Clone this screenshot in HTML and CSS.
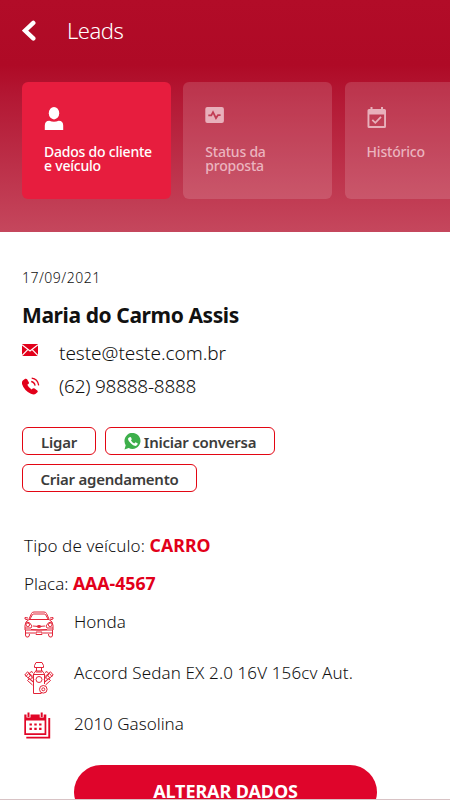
FILE: index.html
```
<!DOCTYPE html>
<html lang="pt-BR">

<head>
    <meta charset="utf-8">
    <title>Leads</title>
    <link rel="stylesheet" href="styles.css">
</head>

<body>
    <header class="header">
        <div class="top-bar">
            <svg class="back" viewBox="0 0 14 22" width="14" height="22">
                <path d="M11.3 2.9L3 10.6l8.3 7.8" />
            </svg>
            <h1>Leads</h1>
        </div>

        <nav class="tabs">
            <div class="tab active">
                <svg viewBox="0 0 20 24" width="20" height="24">
                    <ellipse cx="10" cy="6.2" rx="5.2" ry="6.2" />
                    <path d="M.8 23v-4.500q0-4.700 4.500-4.700q4.700 1.700 9.400 0q4.500 0 4.500 4.700V23z" />
                </svg>
                <span>Dados do cliente<br>e veículo</span>
            </div>
            <div class="tab">
                <svg viewBox="0 0 20 24" width="20" height="24">
                    <rect x=".3" width="18.600" height="16" rx="2" />
                    <path class="pulse" d="M3.300 8.300h3l1.700-3.200 3 6 2-3h2.600" />
                </svg>
                <span>Status da<br>proposta</span>
            </div>
            <div class="tab">
                <svg viewBox="0 0 20 24" width="20" height="24">
                    <path fill-rule="evenodd" d="M3.500 0h2v2h8.500V0h2v2h1.500q1.500 0 1.500 1.500v16q0 1.500-1.500 1.500h-15.500q-1.500 0-1.500-1.500V3.500Q.5 2 2 2h1.500zM2.400 7.500v11.500h14.700V7.500z" />
                    <path class="check" d="M5.300 12.800l3 3 5.700-6" />
                </svg>
                <span>Histórico</span>
            </div>
        </nav>
    </header>

    <main>
        <section class="client">
            <p class="date">17/09/2021</p>
            <h2>Maria do Carmo Assis</h2>
            <div class="contact email">
                <svg viewBox="0 0 16 12" width="16" height="12">
                    <rect width="16" height="12" />
                    <path class="envelope" d="M0 .8l8 6.200L16 .8M0 11.600l5.800-6M16 11.600l-5.800-6" />
                </svg>
                <span>teste@teste.com.br</span>
            </div>
            <div class="contact phone">
                <svg viewBox="0 0 18 18" width="18" height="18">
                    <path d="M.8 3.500L3.200 1.800q1.300-.5 1.900.5l1.700 2.900q.5 1-.4 1.700l-1.100.9q1.300 3 4.300 4.700l1.100-1q.9-.7 1.900 0l2.700 1.900q.9.900.1 1.800l-2 1.900q-1.500 1-4.500-.4Q2.300 13.800 0 7q-.4-2.300.8-3.500z" />
                    <path class="wave" d="M9.200 4.500q3.200.5 3.900 4.200M9.700 1.200q6 .8 7 7.200" />
                </svg>
                <span>(62) 98888-8888</span>
            </div>
        </section>

        <div class="actions">
            <button class="call">Ligar</button>
            <button class="chat">
                <svg viewBox="0 0 17 17" width="17" height="17">
                    <path d="M.5 16.500l1.200-4.300a8 8 0 1 1 3 2.800z" />
                    <path class="handset" d="M5 4.400l1.200-.5q.7 0 .9.6l.7 1.700-.8 1.300q1.100 2 3.200 2.900l1.200-1.200 2.100 1q.4.3.2.9-.5 1.700-2.200 1.800Q9.300 13 7 10.600 4 7.700 4 5.900 4 5 5 4.400z" />
                </svg>
                <span>Iniciar conversa</span>
            </button>
            <button class="schedule">Criar agendamento</button>
        </div>

        <section class="vehicle">
            <p class="type"><span>Tipo de veículo:</span> <b>CARRO</b></p>
            <p class="plate"><span>Placa:</span> <b>AAA-4567</b></p>

            <div class="spec brand">
                <svg class="line-icon" viewBox="0 0 30 28" width="30" height="28">
                    <path d="M5 8L7.500 2.500Q8 1 10 1h10q2 0 2.500 1.500L25 8M6 8l2.500-4.500Q9 3 10 3h10q1 0 1.500.5L24 8M5 8.500h20M5 8.500q-4 2-4 6V19h28v-4.500q0-4-4-6M4 7L1 6.500V8l3 1M26 7l3-.5V8l-3 1M2 11q4-.5 6 4l-1 2H1M28 11q-4-.5-6 4l1 2h6M9 15q6 1 12 0M7 18.500q8 1 16 0M1.500 19v5q0 2 1.500 2H4q1.500 0 1.500-3M28.500 19v5q0 2-1.500 2H26q-1.500 0-1.500-3M2 22h9M19 22h9M12 21h6v2.500h-6z" />
                    <circle cx="3.800" cy="13.800" r="1.800" />
                    <circle cx="26.200" cy="13.800" r="1.800" />
                    <ellipse cx="15" cy="15.500" rx="2" ry="1" />
                </svg>
                <span>Honda</span>
            </div>
            <div class="spec model">
                <svg class="line-icon" viewBox="0 0 30 34" width="30" height="34">
                    <path d="M10.500 6.500v-2L12 1.500h6l1.500 3v2zM12.500 6.500V10h5V6.500M12.500 9L9.500 13v19.500h8M17.500 9l3 4v10M9.500 13.500h11M12 11h6M9 11.500L7 10.500 5 13l5 5.500M21 11.500l2-1 2 2.500-5 5.500M9 21L.8 14l2.700-3.200L9.500 16M21 21l8.200-7-2.700-3.200L20.500 16M8.500 24l-5-4.500 2-2L9 20.500M21.500 24l5-4.500-2-2L21 20.500M2 15.500L4.700 12.300M28 15.500l-2.700-3.200M4 17.200l2.500-3.100M26 17.200l-2.500-3.100M6 18.800l2.300-2.600M24 18.800l-2.300-2.600" />
                    <circle cx="15" cy="18.500" r="3" />
                    <circle cx="19.300" cy="28.300" r="3.800" />
                    <circle cx="19.300" cy="28.300" r="1.500" />
                </svg>
                <span>Accord Sedan EX 2.0 16V 156cv Aut.</span>
            </div>
            <div class="spec year">
                <svg viewBox="0 0 30 28" width="30" height="28">
                    <path fill-rule="evenodd" d="M.3 2.500h22v20.500H.3zM2 8.500v12.800h18.600V8.500z" />
                    <path class="rings" d="M4.500 0v5.500M17.700 0v5.500" />
                    <path class="ring-lines" d="M4.500 .5v4.500M17.700 .5v4.500" />
                    <path d="M24.300 6h1.900v20.600H2.300v-1.900h22z" />
                    <path class="days" d="M5.500 12.500h12M5.500 16.800h12" />
                </svg>
                <span>2010 Gasolina</span>
            </div>
        </section>

        <button class="edit">ALTERAR DADOS</button>
    </main>

    <div class="bottom-line"></div>
</body>

</html>
```
FILE: styles.css
```
* {
    box-sizing: border-box;
}

body {
    position: relative;
    height: 800px;
    margin: 0;
    overflow: hidden;
    background-color: #ffffff;
    color: #111111;
    font-family: "Noto Sans", "Open Sans", sans-serif;
    font-weight: 300;
}

h1, h2, p {
    margin: 0;
}

svg {
    display: block;
    flex: none;
}

span {
    white-space: nowrap;
}

/* Header */
.header {
    height: 232px;
    background: linear-gradient(#b20c28, #af0a26 65px, #b31733 95px, #c5475d);
    color: #ffffff;
}

.top-bar {
    display: flex;
    align-items: center;
    gap: 31px;
    height: 62px;
    padding-left: 22px;
}

.top-bar h1 {
    margin-top: -2px;
    font-size: 22px;
    font-weight: 300;
    letter-spacing: -0.5px;
}

.back path {
    fill: none;
    stroke: #ffffff;
    stroke-width: 4.4;
    stroke-linecap: round;
}

.tabs {
    display: flex;
    gap: 12.3px;
    padding: 20px 0 0 22px;
    overflow: hidden;
}

.tab {
    flex: none;
    width: 149px;
    height: 117px;
    padding: 25px 0 0 22px;
    border-radius: 6px;
    background-color: rgba(255, 255, 255, 0.14);
    color: #ebb4bf;
    font-size: 14px;
    font-weight: 500;
    letter-spacing: -0.22px;
    line-height: 13.5px;
}

.tab svg {
    margin-bottom: 14px;
    fill: #e8b0bb;
}

.tab span {
    display: block;
}

.tab.active {
    background-color: #e71d3e;
    color: #ffffff;
}

.tab.active svg {
    fill: #ffffff;
}

.tab .pulse, .tab .check {
    fill: none;
    stroke: #c13d55;
    stroke-width: 1.8;
}

.tab .check {
    stroke: #e8b0bb;
}

/* Client */
main {
    padding: 0 22px;
}

.client {
    padding-top: 36px;
}

.date {
    font-size: 14px;
    letter-spacing: 0.5px;
    line-height: 20px;
}

.client h2 {
    margin: 12px 0 6px;
    font-size: 21px;
    font-weight: 700;
    letter-spacing: -0.4px;
    line-height: 30px;
}

.contact {
    display: flex;
    align-items: center;
    height: 33px;
    font-size: 19px;
    fill: #e2001a;
}

.email {
    letter-spacing: -0.05px;
}

.email svg {
    margin: 0 21px 5px 0;
}

.phone {
    letter-spacing: -0.25px;
}

.phone svg {
    margin-right: 19px;
}

.envelope {
    fill: none;
    stroke: #ffffff;
    stroke-width: 1.2;
}

.wave {
    fill: none;
    stroke: #e2001a;
    stroke-width: 1.3;
}

/* Buttons */
.actions {
    display: flex;
    flex-wrap: wrap;
    gap: 9px;
    margin-top: 25px;
}

.actions button {
    display: flex;
    align-items: center;
    justify-content: center;
    gap: 3px;
    height: 28px;
    padding: 2px 0 0;
    border: 1px solid #e30613;
    border-radius: 6px;
    background-color: #ffffff;
    color: #3c3c3b;
    font-family: inherit;
    font-size: 15px;
    font-weight: 600;
    letter-spacing: -0.25px;
    white-space: nowrap;
}

.actions .call {
    width: 74px;
}

.actions .chat {
    width: 170px;
}

.actions .schedule {
    width: 175px;
}

.chat svg {
    margin-top: -2px;
    fill: #3daf4b;
}

.chat .handset {
    fill: #ffffff;
}

/* Vehicle */
.vehicle {
    padding: 34px 0 0 2px;
    font-size: 17px;
}

.vehicle p {
    height: 38px;
    line-height: 38px;
}

.vehicle .type {
    letter-spacing: 0.1px;
}

.vehicle b {
    color: #e2001a;
    font-size: 17.7px;
    font-weight: 700;
}

.spec {
    display: flex;
    align-items: center;
    gap: 20px;
    height: 51px;
    fill: #e10627;
}

.brand {
    height: 39px;
    margin-bottom: 6px;
}

.brand svg {
    margin-top: 6px;
}

.model {
    letter-spacing: 0.12px;
}

.model svg {
    margin-top: 11px;
}

.year svg {
    margin-top: 5px;
}

.line-icon {
    fill: none;
    stroke: #e32438;
    stroke-width: 1;
}

.rings, .ring-lines {
    stroke: #ffffff;
    stroke-width: 4;
}

.ring-lines {
    stroke: #e10627;
    stroke-width: 2;
}

.days {
    fill: none;
    stroke: #e10627;
    stroke-width: 2.2;
    stroke-dasharray: 2.4 2.4;
}

.edit {
    display: block;
    width: 303px;
    height: 54px;
    margin: 16px 0 0 52px;
    padding: 0 0 2px;
    border: none;
    border-radius: 27px;
    background-color: #df052b;
    color: #ffffff;
    font-family: inherit;
    font-size: 18px;
    font-weight: 700;
    letter-spacing: -0.1px;
}

.bottom-line {
    position: absolute;
    bottom: 0;
    left: 0;
    width: 100%;
    height: 1px;
    background-color: #d8c3c5;
}
```
